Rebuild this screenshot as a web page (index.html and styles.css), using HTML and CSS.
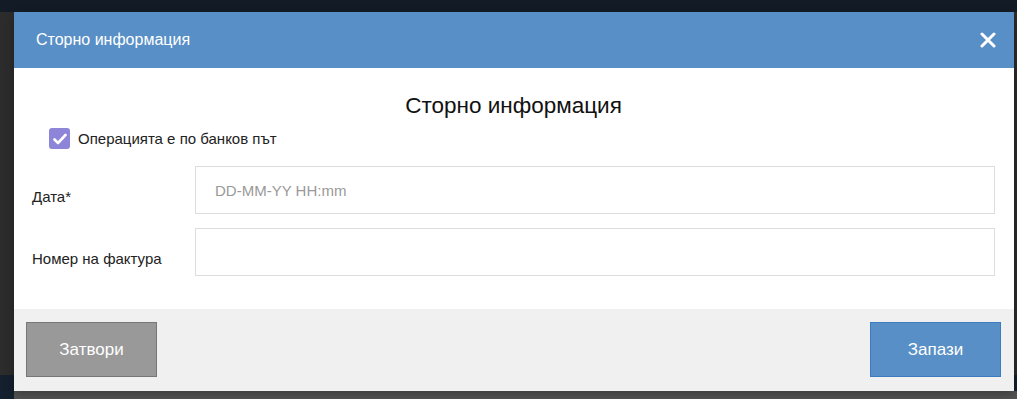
FILE: index.html
```html
<!DOCTYPE html>
<html lang="bg">
<head>
    <meta charset="UTF-8">
    <title>Сторно информация</title>
    <link rel="stylesheet" href="styles.css">
</head>
<body>
    <div class="backdrop">
        <div class="modal">
            <div class="modal-header">
                <span class="modal-title">Сторно информация</span>
                <button class="close-btn" aria-label="Затвори">
                    <svg width="16" height="16" viewBox="0 0 16 16">
                        <path d="M2 2 L14 14 M14 2 L2 14" stroke="#fff" stroke-width="3" stroke-linecap="round"/>
                    </svg>
                </button>
            </div>
            <div class="modal-body">
                <h3 class="form-title">Сторно информация</h3>
                <label class="check-row">
                    <span class="check-box">
                        <svg width="14" height="12" viewBox="0 0 14 12">
                            <path d="M1.5 6.5 L5 10 L12.5 2" fill="none" stroke="#fff" stroke-width="2.6" stroke-linecap="round" stroke-linejoin="round"/>
                        </svg>
                    </span>
                    Операцията е по банков път
                </label>
                <div class="form-grid">
                    <label class="field-label">Дата*</label>
                    <input type="text" class="field-input" placeholder="DD-MM-YY HH:mm">
                    <label class="field-label">Номер на фактура</label>
                    <input type="text" class="field-input">
                </div>
            </div>
            <div class="modal-footer">
                <button class="btn btn-close">Затвори</button>
                <button class="btn btn-save">Запази</button>
            </div>
        </div>
    </div>
</body>
</html>
```

FILE: styles.css
```css
body {
    margin: 0;
    height: 399px;
    overflow: hidden;
    font-family: "Liberation Sans", Arial, sans-serif;
    background: linear-gradient(#131c26 0, #131c26 12px, #2c2c2c 12px, #2c2c2c 375px, #14202d 375px);
}

.backdrop {
    padding: 12px 3px 0 14px;
    height: 399px;
    box-sizing: border-box;
    background: linear-gradient(to right, transparent 14px, #555 14px);
    background-size: 100% 8px;
    background-position: 0 391px;
    background-repeat: no-repeat;
}

.modal {
    width: 1000px;
    background: #fff;
    box-shadow: 0 4px 10px rgba(0, 0, 0, 0.3);
}

.modal-header {
    height: 56px;
    background: #588fc7;
    display: flex;
    align-items: center;
    justify-content: space-between;
    padding: 0 18px 0 22px;
}

.modal-title {
    color: #fff;
    font-size: 16px;
}

.close-btn {
    background: transparent;
    border: 0;
    padding: 0;
    display: flex;
    cursor: pointer;
}

.modal-body {
    padding: 23px 19px 33px 18px;
}

.form-title {
    margin: 0;
    text-align: center;
    font-weight: normal;
    font-size: 22.5px;
    line-height: 30px;
    color: #111;
}

.check-row {
    display: flex;
    align-items: center;
    gap: 8px;
    margin: 7px 0 0 17px;
    font-size: 15px;
    color: #222;
}

.check-box {
    width: 21px;
    height: 21px;
    border-radius: 3px;
    background: #8c85d8;
    display: flex;
    align-items: center;
    justify-content: center;
}

.form-grid {
    display: grid;
    grid-template-columns: 163px 800px;
    row-gap: 14px;
    margin-top: 17px;
}

.field-label {
    font-size: 15px;
    color: #222;
    align-self: end;
    padding-bottom: 9px;
}

.field-input {
    height: 48px;
    box-sizing: border-box;
    border: 1px solid #ddd;
    padding: 0 19px;
    font-size: 15px;
    font-family: "Liberation Sans", Arial, sans-serif;
    color: #333;
}

.field-input::placeholder {
    color: #999;
}

.modal-footer {
    background: #f0f0f0;
    display: flex;
    justify-content: space-between;
    padding: 13px 13px 14px 12px;
}

.btn {
    width: 131px;
    height: 55px;
    font-size: 17px;
    font-family: "Liberation Sans", Arial, sans-serif;
    color: #fff;
    cursor: pointer;
}

.btn-close {
    background: #999;
    border: 1px solid #777;
}

.btn-save {
    background: #588fc7;
    border: 1px solid #3d7bc0;
}
```
